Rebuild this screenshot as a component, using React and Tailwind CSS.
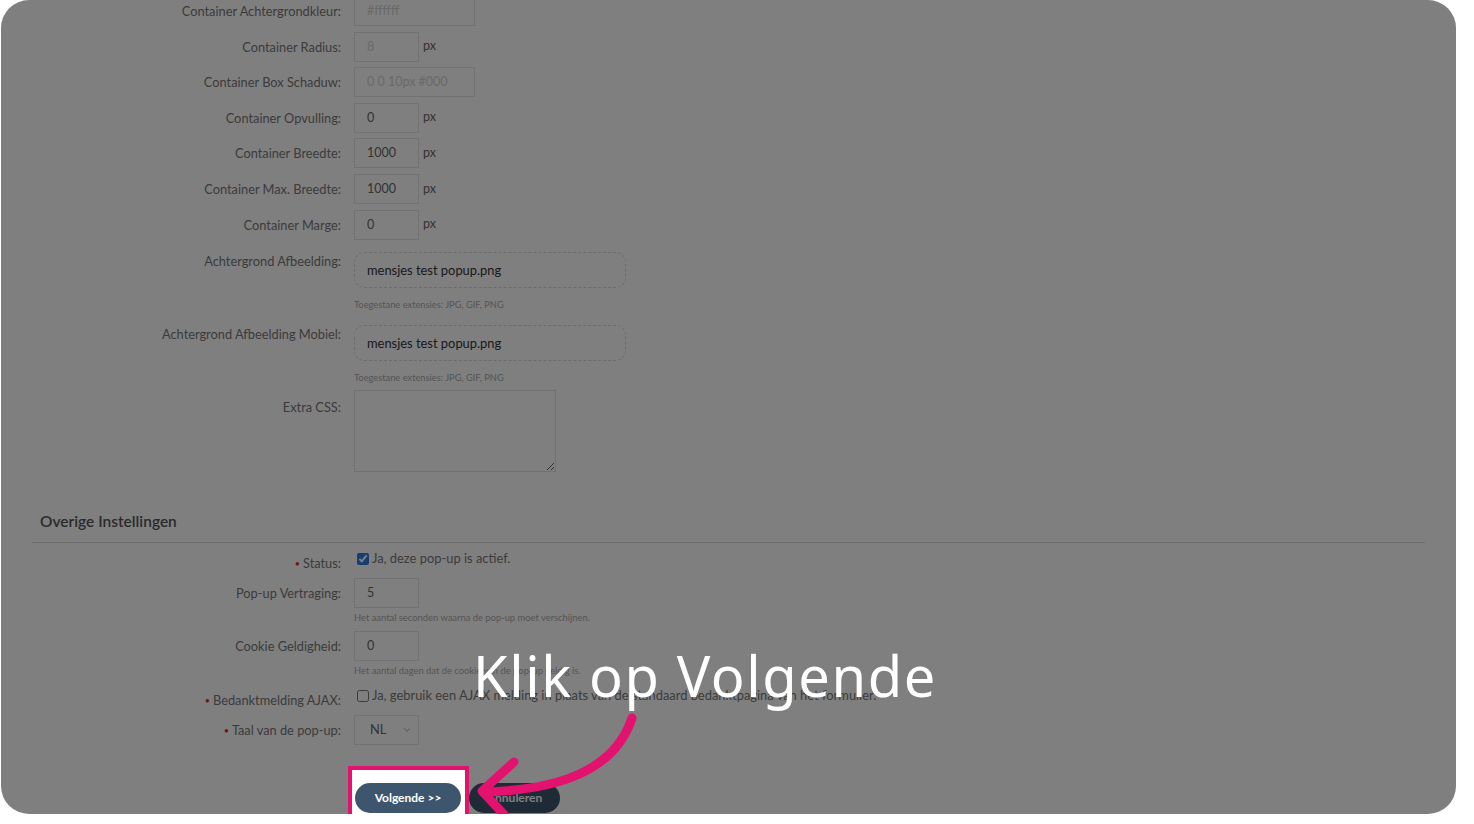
import { ChevronDown } from 'lucide-react';

function Row({ label, required, className = '', labelClass = '', children }) {
  return (
    <div className={`flex ${className}`}>
      <div className={`w-[340px] shrink-0 text-right text-[12.8px] leading-[30px] text-[#777] ${labelClass}`}>
        {required && <span className="text-[#e02a2a] text-[9px] mr-[3px] align-[1px]">•</span>}
        {label}
      </div>
      <div className="ml-[13px]">{children}</div>
    </div>
  );
}

function Field({ value, wide, light, unit }) {
  return (
    <div className="flex items-center">
      <div
        className={`h-[30px] ${wide ? 'w-[121px]' : 'w-[65px]'} border border-[#e4e4e4] bg-white px-[12px] text-[12.5px] leading-[28px] ${light ? 'text-[#d2d2d2]' : 'text-[#666]'}`}
      >
        {value}
      </div>
      {unit && <span className="ml-[4px] text-[12.5px] text-[#666]">px</span>}
    </div>
  );
}

function FileBox({ name }) {
  return (
    <div>
      <div className="mt-[6px] h-[36px] w-[272px] rounded-[10px] border border-dashed border-[#d6d6d6] px-[12px] text-[12.9px] leading-[34px] text-[#333]">
        {name}
      </div>
      <div className="mt-[12px] text-[9.3px] leading-[10px] text-[#aaa]">Toegestane extensies: JPG, GIF, PNG</div>
    </div>
  );
}

function Check({ checked, text }) {
  return (
    <label className="flex h-[22px] items-center gap-[3px] pl-[3px] text-[12.9px] text-[#777] whitespace-nowrap">
      <input type="checkbox" readOnly checked={checked} className="m-0 h-[12px] w-[12px] accent-[#2f7de1]" />
      {text}
    </label>
  );
}

export default function App() {
  return (
    <div className="h-[824px] w-[1474px] overflow-hidden bg-white">
      <div className="relative ml-[1px] h-[814px] w-[1455px] overflow-hidden rounded-[28px] bg-white font-['Lato',sans-serif]">
        <div className="-mt-[4px]">
          <Row label="Container Achtergrondkleur:" className="mb-[5.6px]">
            <Field value="#ffffff" wide light />
          </Row>
          <Row label="Container Radius:" className="mb-[5.6px]">
            <Field value="8" light unit />
          </Row>
          <Row label="Container Box Schaduw:" className="mb-[5.6px]">
            <Field value="0 0 10px #000" wide light />
          </Row>
          <Row label="Container Opvulling:" className="mb-[5.6px]">
            <Field value="0" unit />
          </Row>
          <Row label="Container Breedte:" className="mb-[5.6px]">
            <Field value="1000" unit />
          </Row>
          <Row label="Container Max. Breedte:" className="mb-[5.6px]">
            <Field value="1000" unit />
          </Row>
          <Row label="Container Marge:" className="mb-[6px]">
            <Field value="0" unit />
          </Row>
          <Row label="Achtergrond Afbeelding:" className="mb-[9px]">
            <FileBox name="mensjes test popup.png" />
          </Row>
          <Row label="Achtergrond Afbeelding Mobiel:" className="mb-[7px]">
            <FileBox name="mensjes test popup.png" />
          </Row>
          <Row label="Extra CSS:" labelClass="mt-[2px]">
            <textarea readOnly className="block h-[82px] w-[202px] border border-[#e4e4e4] bg-white" />
          </Row>

          <div className="mx-[31px] mt-[39px] border-b border-[#d8d8d8] pb-[11px] pl-[8px] text-[15.5px] font-semibold leading-[20px] text-[#555]">
            Overige Instellingen
          </div>

          <Row label="Status:" required className="mt-[5px] h-[30px]">
            <Check checked text="Ja, deze pop-up is actief." />
          </Row>
          <Row label="Pop-up Vertraging:">
            <Field value="5" />
            <div className="mt-[5px] whitespace-nowrap text-[9.4px] leading-[10px] text-[#aaa]">
              Het aantal seconden waarna de pop-up moet verschijnen.
            </div>
          </Row>
          <Row label="Cookie Geldigheid:" className="mt-[8px]">
            <Field value="0" />
            <div className="mt-[5px] whitespace-nowrap text-[9.4px] leading-[10px] text-[#aaa]">
              Het aantal dagen dat de cookie van de pop-up geldig is.
            </div>
          </Row>
          <Row label="Bedanktmelding AJAX:" required className="mt-[9px] h-[30px]">
            <Check text="Ja, gebruik een AJAX melding in plaats van de standaard bedanktpagina van het formulier." />
          </Row>
          <Row label="Taal van de pop-up:" required>
            <div className="flex h-[30px] w-[65px] items-center justify-between border border-[#e4e4e4] bg-white pl-[15px] pr-[6px] text-[12.8px] text-[#666]">
              NL
              <ChevronDown size={10} strokeWidth={1.5} />
            </div>
          </Row>

          <div className="mt-[37px] flex gap-[8px] pl-[354px]">
            <button className="h-[30px] w-[106px] rounded-full bg-[#3d566e] text-[12px] font-bold text-white">
              Volgende &gt;&gt;
            </button>
            <button className="h-[30px] w-[91px] rounded-full bg-[#3d566e] text-[12px] font-bold text-white">
              Annuleren
            </button>
          </div>
        </div>

        {/* dimmed overlay with highlighted button */}
        <div className="absolute left-[347px] top-[766px] h-[70px] w-[121px] border-4 border-[#e3126f] shadow-[0_0_0_3000px_rgba(0,0,0,0.5)]" />

        <svg className="pointer-events-none absolute left-0 top-0" width="1455" height="814" viewBox="0 0 1455 814">
          <g fill="none" stroke="#e3126f" strokeWidth="9" strokeLinecap="round" strokeLinejoin="round">
            <path d="M631 718 C 614 770, 559 790, 482 792" />
            <path d="M513 762 L481 791 L510 822" />
          </g>
        </svg>

        <div className="absolute left-[472px] top-[647px] whitespace-nowrap font-['Noto_Sans',sans-serif] text-[56px] leading-[56px] tracking-[1.6px] text-white">
          Klik op Volgende
        </div>
      </div>
    </div>
  );
}
